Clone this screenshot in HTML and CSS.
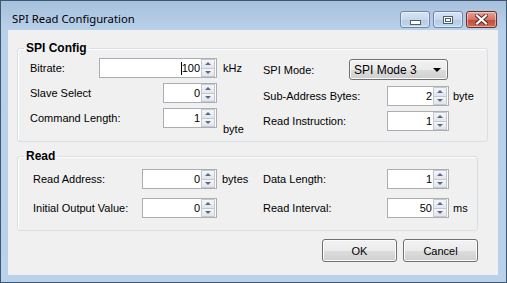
FILE: index.html
```html
<!DOCTYPE html>
<html lang="en">
<head>
  <meta charset="UTF-8" />
  <title>SPI Read Configuration</title>
  <link rel="stylesheet" href="styles.css">
</head>
<body>

  <div class="window">
    <div class="titlebar">
      <span class="title">SPI Read Configuration</span>
      <div class="caption-buttons">
        <div class="cap-btn"><span class="min-glyph"></span></div>
        <div class="cap-btn"><span class="max-glyph"></span></div>
        <div class="cap-btn close">
          <svg width="13" height="11" viewBox="0 0 13 11">
            <path d="M2 1.5 L11 9.5 M11 1.5 L2 9.5" stroke="#5a2a28" stroke-width="4" stroke-linecap="square" />
            <path d="M2 1.5 L11 9.5 M11 1.5 L2 9.5" stroke="#ffffff" stroke-width="2.2" stroke-linecap="square" />
          </svg>
        </div>
      </div>
    </div>

    <div class="client">

      <fieldset class="group group-spi">
        <legend>SPI Config</legend>
        <div class="group-body">
          <div class="half spi-left">
            <div class="row">
              <span class="label lbl-69">Bitrate:</span>
              <div class="ctrl ctrl-118">
                <div class="spin w118"><span class="spin-value"><i class="caret"></i>100</span><span class="spin-btns"><span class="up"></span><span class="down"></span></span></div>
              </div>
              <span class="unit unit-left">kHz</span>
            </div>
            <div class="row">
              <span class="label lbl-69">Slave Select</span>
              <div class="ctrl ctrl-118">
                <div class="spin w54"><span class="spin-value">0</span><span class="spin-btns"><span class="up"></span><span class="down"></span></span></div>
              </div>
            </div>
            <div class="row">
              <span class="label lbl-69">Command Length:</span>
              <div class="ctrl ctrl-118">
                <div class="spin w54"><span class="spin-value">1</span><span class="spin-btns"><span class="up"></span><span class="down"></span></span></div>
              </div>
              <span class="unit unit-left unit-low">byte</span>
            </div>
          </div>

          <div class="half spi-right">
            <div class="row row-combo">
              <span class="label lbl-86">SPI Mode:</span>
              <div class="ctrl ctrl-100">
                <div class="combo"><span>SPI Mode 3</span><i class="combo-arrow"></i></div>
              </div>
            </div>
            <div class="row row-gap7">
              <span class="label lbl-86">Sub-Address Bytes:</span>
              <div class="ctrl ctrl-100">
                <div class="spin w62"><span class="spin-value">2</span><span class="spin-btns"><span class="up"></span><span class="down"></span></span></div>
              </div>
              <span class="unit unit-right">byte</span>
            </div>
            <div class="row">
              <span class="label lbl-86">Read Instruction:</span>
              <div class="ctrl ctrl-100">
                <div class="spin w62"><span class="spin-value">1</span><span class="spin-btns"><span class="up"></span><span class="down"></span></span></div>
              </div>
            </div>
          </div>
        </div>
      </fieldset>

      <fieldset class="group group-read">
        <legend>Read</legend>
        <div class="group-body">
          <div class="half read-left">
            <div class="row">
              <span class="label lbl-109">Read Address:</span>
              <div class="spin w75"><span class="spin-value">0</span><span class="spin-btns"><span class="up"></span><span class="down"></span></span></div>
              <span class="unit unit-read">bytes</span>
            </div>
            <div class="row">
              <span class="label lbl-109">Initial Output Value:</span>
              <div class="spin w75"><span class="spin-value">0</span><span class="spin-btns"><span class="up"></span><span class="down"></span></span></div>
            </div>
          </div>

          <div class="half read-right">
            <div class="row">
              <span class="label lbl-124">Data Length:</span>
              <div class="spin w62"><span class="spin-value">1</span><span class="spin-btns"><span class="up"></span><span class="down"></span></span></div>
            </div>
            <div class="row">
              <span class="label lbl-124">Read Interval:</span>
              <div class="spin w62"><span class="spin-value">50</span><span class="spin-btns"><span class="up"></span><span class="down"></span></span></div>
              <span class="unit unit-right">ms</span>
            </div>
          </div>
        </div>
      </fieldset>

      <div class="actions">
        <button class="btn">OK</button>
        <button class="btn">Cancel</button>
      </div>

    </div>
  </div>

</body>
</html>
```

FILE: styles.css
```css
body {
  margin: 0;
  font-family: "Liberation Sans", Arial, sans-serif;
  font-size: 11px;
  color: #000;
  background: #fff;
}

.window {
  box-sizing: border-box;
  width: 507px;
  height: 283px;
  border: 1px solid #3e5873;
  background: linear-gradient(#a6c0dd 0px, #b9d0ea 28px, #b9d1ea 100%);
  display: flex;
  flex-direction: column;
}

/* title bar */

.titlebar {
  height: 29px;
  display: flex;
  justify-content: space-between;
  align-items: flex-start;
  padding: 0 9px 0 11px;
}

.title {
  font-family: "Noto Sans", "Open Sans", sans-serif;
  font-size: 11.3px;
  line-height: 16px;
  margin-top: 10px;
  color: #000;
}

.caption-buttons {
  display: flex;
  gap: 3px;
  margin-top: 10px;
}

.cap-btn {
  box-sizing: border-box;
  width: 30px;
  height: 17px;
  border: 1px solid #6c87a8;
  border-radius: 3px;
  background: linear-gradient(#d9e5f3 0%, #c6d8ed 50%, #b5cbe4 51%, #c3d6ec 100%);
  box-shadow: inset 0 0 0 1px rgba(255, 255, 255, 0.45);
  display: flex;
  align-items: center;
  justify-content: center;
}

.cap-btn.close {
  width: 31px;
  border-color: #6e2a26;
  background: linear-gradient(#e7a394 0%, #d47464 50%, #c24a3a 51%, #cf6a52 100%);
}

.min-glyph {
  box-sizing: border-box;
  width: 11px;
  height: 5px;
  margin-top: 5px;
  border: 1px solid #4f5d6e;
  background: #fff;
}

.max-glyph {
  box-sizing: border-box;
  width: 10px;
  height: 8px;
  border: 1px solid #4f5d6e;
  background: #fff;
  box-shadow: inset 0 0 0 1px #fff, inset 0 0 0 2px #4f5d6e;
}

/* client area */

.client {
  flex: 1;
  margin: 0 8px 7px 7px;
  background: #f0f0f0;
  display: flex;
  flex-direction: column;
  align-items: flex-start;
}

.group {
  box-sizing: border-box;
  margin: 0 0 0 9px;
  padding: 0 6px;
  border: 1px solid #d5dfe5;
  border-radius: 3px;
  box-shadow: inset 1px 1px 0 #fff;
}

.group legend {
  font-weight: bold;
  font-size: 12px;
  line-height: 14px;
  padding: 0 2px;
}

.group-spi {
  width: 471px;
  margin-top: 11px;
  padding-top: 3px;
  padding-bottom: 10px;
}

.group-read {
  width: 461px;
  margin-top: 7px;
  padding-top: 6px;
  padding-bottom: 12px;
}

.group-body {
  display: flex;
  align-items: flex-start;
}

.half {
  display: flex;
  flex-direction: column;
}

.spi-left {
  margin-left: 6px;
  width: 233px;
  gap: 5px;
}

.spi-right {
  margin-top: 1px;
}

.read-left {
  margin-left: 9px;
  width: 230px;
  gap: 9px;
}

.read-right {
  gap: 9px;
}

.row {
  display: flex;
  align-items: center;
}

.spi-right .row + .row {
  margin-top: 5px;
}

.spi-right .row.row-gap7 {
  margin-top: 6px;
}

.label {
  flex: none;
  white-space: nowrap;
}

.lbl-69 { width: 69px; }
.lbl-86 { width: 86px; }
.lbl-109 { width: 109px; }
.lbl-124 { width: 124px; }

.ctrl {
  display: flex;
}

.ctrl-118 {
  width: 118px;
  justify-content: flex-end;
}

.ctrl-100 {
  width: 100px;
}

.spi-right .ctrl-100 {
  justify-content: flex-end;
}

.spi-right .row-combo .ctrl-100 {
  justify-content: flex-start;
}

.unit {
  white-space: nowrap;
}

.unit-left {
  margin-left: 6px;
}

.unit-low {
  align-self: flex-end;
  margin-bottom: -7px;
}

.unit-right {
  margin-left: 4px;
}

.unit-read {
  margin-left: 5px;
}

/* numeric up/down */

.spin {
  box-sizing: border-box;
  height: 20px;
  display: flex;
  border: 1px solid #abadb3;
  background: #fff;
}

.w118 { width: 118px; }
.w54 { width: 54px; }
.w62 { width: 62px; }
.w75 { width: 75px; }

.spin-value {
  flex: 1;
  text-align: right;
  line-height: 18px;
  padding-right: 1px;
  display: flex;
  justify-content: flex-end;
  align-items: center;
}

.caret {
  width: 1px;
  height: 13px;
  background: #000;
}

.spin-btns {
  width: 14px;
  display: flex;
  flex-direction: column;
  margin: 0 1px 0 0;
}

.spin-btns span {
  flex: 1;
  box-sizing: border-box;
  border: 1px solid #c3c8d1;
  background: linear-gradient(#f6f6f6, #e2e5ea);
  display: flex;
  align-items: center;
  justify-content: center;
}

.spin-btns span + span {
  border-top: none;
}

.spin-btns .up::after {
  content: "";
  border-left: 3px solid transparent;
  border-right: 3px solid transparent;
  border-bottom: 3px solid #55698f;
}

.spin-btns .down::after {
  content: "";
  border-left: 3px solid transparent;
  border-right: 3px solid transparent;
  border-top: 3px solid #55698f;
}

/* combo box */

.combo {
  box-sizing: border-box;
  width: 99px;
  height: 21px;
  border: 1px solid #707070;
  border-radius: 3px;
  background: linear-gradient(#f2f2f2 0%, #ebebeb 50%, #dddddd 51%, #cfcfcf 100%);
  box-shadow: inset 0 0 0 1px #fbfbfb;
  display: flex;
  align-items: center;
  justify-content: space-between;
  padding: 0 6px 0 4px;
  font-size: 12px;
}

.combo-arrow {
  border-left: 4px solid transparent;
  border-right: 4px solid transparent;
  border-top: 4px solid #000;
}

/* dialog buttons */

.actions {
  align-self: stretch;
  display: flex;
  justify-content: flex-end;
  gap: 6px;
  margin-top: 8px;
  padding-right: 20px;
}

.btn {
  box-sizing: border-box;
  width: 75px;
  height: 23px;
  border: 1px solid #707070;
  border-radius: 3px;
  background: linear-gradient(#f2f2f2 0%, #ebebeb 50%, #dddddd 51%, #cfcfcf 100%);
  box-shadow: inset 0 0 0 1px #fcfcfc;
  font-family: "Liberation Sans", Arial, sans-serif;
  font-size: 11px;
  color: #000;
  padding: 0;
}
```
